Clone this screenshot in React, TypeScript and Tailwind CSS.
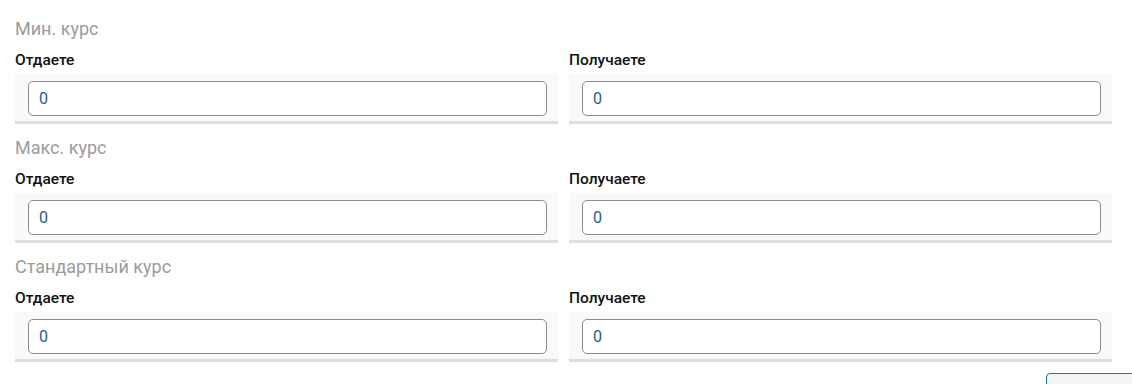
import React from "react";

const sections = ["Мин. курс", "Макс. курс", "Стандартный курс"];

function Field({ label }: { label: string }) {
    return (
        <div className="flex flex-col">
            <div className="h-5 pt-px text-[15.5px] leading-5 font-medium text-[#111]">{label}</div>
            <div className="mt-[5px] bg-[#f9f9f9] border-b-[3px] border-[#dedede] pl-[13px] pr-[11px] pt-[7px] pb-[5px]">
                <input
                    type="text"
                    defaultValue="0"
                    className="block w-full h-[35px] rounded-[5px] border border-[#8c8c8c] bg-white px-[10px] text-base text-[#1f5c99] outline-none"
                />
            </div>
        </div>
    );
}

export default function App() {
    return (
        <div
            className="h-[384px] w-[1132px] overflow-hidden bg-white pt-[17px]"
            style={{ fontFamily: "Roboto, 'Noto Sans', sans-serif" }}
        >
            <div className="ml-[15px] w-[1097px] flex flex-col gap-3">
                {sections.map((title) => (
                    <div key={title} className="flex flex-col">
                        <div className="h-6 text-[18px] leading-6 text-[#9b9b9b]">{title}</div>
                        <div className="mt-2 grid grid-cols-2 gap-[11px]">
                            <Field label="Отдаете" />
                            <Field label="Получаете" />
                        </div>
                    </div>
                ))}
            </div>
            <div className="mt-[11px] ml-[1046px] w-[120px] h-10 rounded-[4px] border border-[#2173b9] bg-[#f5f5f5]" />
        </div>
    );
}
